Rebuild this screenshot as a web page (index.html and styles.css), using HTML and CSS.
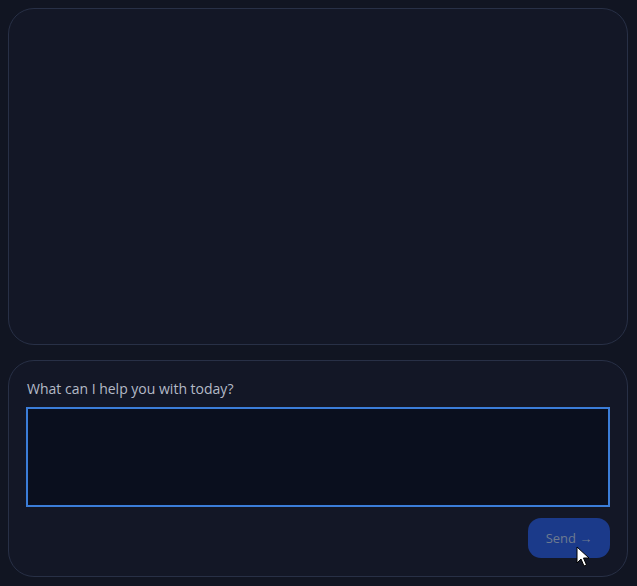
FILE: index.html
```html
<!DOCTYPE html>
<html lang="en">
<head>
  <meta charset="UTF-8">
  <meta name="viewport" content="width=device-width, initial-scale=1.0">
  <title>Assistant</title>
  <link rel="stylesheet" href="styles.css">
</head>
<body>
  <div class="chat-container">
    <div class="messages"></div>
    <form class="composer" id="composer">
      <label for="prompt">What can I help you with today?</label>
      <textarea id="prompt"></textarea>
      <div class="actions">
        <button type="submit" class="send-btn">Send &rarr;
          <svg class="cursor" width="14" height="22" viewBox="0 0 14 22">
            <path d="M1 1 L1 17 L5 13 L8 20 L10.5 19 L7.5 12 L13 12 Z" fill="#fff" stroke="#000" stroke-width="1"/>
          </svg>
        </button>
      </div>
    </form>
  </div>
</body>
</html>
```

FILE: styles.css
```css
/* Universal Styling */
* {
  margin: 0;
  padding: 0;
  box-sizing: border-box;
}

body {
  font-family: 'Open Sans', 'Noto Sans', sans-serif;
  background-color: #111522;
  padding: 8px 9px 9px 8px;
  height: 100vh;
}

.chat-container {
  display: flex;
  flex-direction: column;
  gap: 15px;
}

.messages {
  flex-shrink: 0;
  height: 337px;
  background-color: #131726;
  border: 1px solid #283046;
  border-radius: 26px;
}

.composer {
  flex-shrink: 0;
  background-color: #131726;
  border: 1px solid #283046;
  border-radius: 26px;
  padding: 18px 17px 18px 17px;
  display: flex;
  flex-direction: column;
}

.composer label {
  font-size: 14px;
  color: #b4bac6;
  line-height: 20px;
  margin-bottom: 8px;
  padding-left: 1px;
}

.composer textarea {
  height: 100px;
  width: 100%;
  background-color: #0a0f1e;
  border: 2px solid #3b7dd8;
  resize: none;
  outline: none;
  color: #e5e7eb;
  font-family: inherit;
  font-size: 14px;
  padding: 8px;
}

.actions {
  display: flex;
  justify-content: flex-end;
  margin-top: 11px;
}

.send-btn {
  position: relative;
  width: 82px;
  height: 40px;
  background-color: #1b3a8a;
  border: none;
  border-radius: 13px;
  color: #6e7a90;
  font-family: inherit;
  font-size: 13px;
  cursor: pointer;
}

.cursor {
  position: absolute;
  left: 48px;
  top: 28px;
}
```
